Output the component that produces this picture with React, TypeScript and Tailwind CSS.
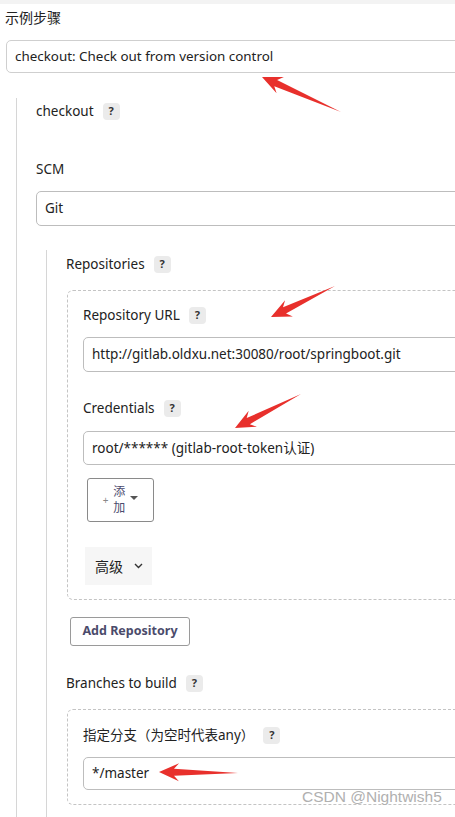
import React from "react";

type Pt = { x: number; y: number };

// red annotation arrow, tapering tail to wide head
function arrowPoints(tip: Pt, tail: Pt, hl = 20, hw = 9, nw = 3.5) {
  const dx = tip.x - tail.x;
  const dy = tip.y - tail.y;
  const len = Math.hypot(dx, dy);
  const ux = dx / len;
  const uy = dy / len;
  const nx = -uy;
  const ny = ux;
  const p = (a: number, b: number) =>
    `${(tip.x - ux * a + nx * b).toFixed(1)},${(tip.y - uy * a + ny * b).toFixed(1)}`;
  return [
    `${tip.x},${tip.y}`,
    p(hl, hw),
    p(hl * 0.75, nw),
    `${tail.x},${tail.y}`,
    p(hl * 0.75, -nw),
    p(hl, -hw),
  ].join(" ");
}

const arrows: [Pt, Pt][] = [
  [{ x: 262, y: 77 }, { x: 341, y: 112 }],
  [{ x: 271, y: 317 }, { x: 335, y: 286 }],
  [{ x: 235, y: 428 }, { x: 301, y: 394 }],
  [{ x: 159, y: 772 }, { x: 238, y: 773 }],
];

function Help() {
  return (
    <span className="ml-[9px] inline-flex h-[17px] w-[17px] items-center justify-center rounded-[4px] bg-[#ebebeb] text-[11px] font-bold text-[#333]">
      ?
    </span>
  );
}

function Label({ text }: { text: string }) {
  return (
    <div className="flex h-[20px] items-center text-[13.5px] text-[#222]">
      <span>{text}</span>
      <Help />
    </div>
  );
}

function Field({ value, h }: { value: string; h: string }) {
  return (
    <div
      className={`${h} flex w-[420px] items-center rounded-[5px] border border-[#bdbdbd] pl-[8px] text-[13.5px] text-[#222]`}
    >
      {value}
    </div>
  );
}

export default function App() {
  return (
    <div
      className="relative h-[817px] w-[455px] overflow-hidden bg-white"
      style={{ fontFamily: '"Noto Sans", "Noto Sans CJK SC", sans-serif' }}
    >
      <div className="h-[4px] bg-[#f3f3f3]" />
      <div className="ml-[5px] mt-[4px] text-[14px] leading-[20px] text-[#222]">示例步骤</div>

      <div className="ml-[6px] mt-[12px] flex h-[33px] w-[470px] items-center rounded-[5px] border border-[#cfcfcf] pl-[8px] text-[13.4px] text-[#222]">
        checkout: Check out from version control
      </div>

      {/* checkout step */}
      <div className="ml-[16px] mt-[25px] border-l-[1.5px] border-[#d6d6d6] pl-[19px] pt-[3px]">
        <Label text="checkout" />

        <div className="mt-[38px] flex h-[20px] items-center text-[13.5px] text-[#222]">SCM</div>
        <div className="mt-[12px] flex h-[35px] w-[430px] items-center rounded-[5px] border border-[#bdbdbd] pl-[8px] text-[13.5px] text-[#222]">
          Git
        </div>

        {/* git scm */}
        <div className="ml-[10px] mt-[24px] border-l-[1.5px] border-[#d6d6d6] pb-[40px] pl-[19px] pt-[4px]">
          <Label text="Repositories" />

          <div className="ml-[1px] mt-[16px] w-[420px] rounded-[6px] border border-dashed border-[#c4c4c4] pb-[14px] pl-[15px] pt-[14px]">
            <Label text="Repository URL" />
            <div className="mt-[12px]">
              <Field value="http://gitlab.oldxu.net:30080/root/springboot.git" h="h-[35px]" />
            </div>

            <div className="mt-[26px]">
              <Label text="Credentials" />
            </div>
            <div className="mt-[13px]">
              <Field value="root/****** (gitlab-root-token认证)" h="h-[34px]" />
            </div>

            <div className="ml-[4px] mt-[13px] flex h-[44px] w-[67px] items-center justify-center gap-[5px] rounded-[3px] border border-[#8a8a8a] text-[#4b4b6e]">
              <span className="text-[10px] leading-none text-[#888]">+</span>
              <span className="flex flex-col items-center text-[12px] leading-[16px]">
                <span>添</span>
                <span>加</span>
              </span>
              <svg width="8" height="5" viewBox="0 0 8 5" className="mb-[4px]">
                <path d="M0 0 L8 0 L4 4 Z" fill="#555" />
              </svg>
            </div>

            <div className="ml-[2px] mt-[25px] flex h-[38px] w-[67px] items-center gap-[11px] bg-[#f6f6f6] pl-[10px] text-[14px] text-[#222]">
              <span>高级</span>
              <svg width="9" height="6" viewBox="0 0 9 6" fill="none" stroke="#333" strokeWidth="1.4">
                <path d="M1 1 L4.5 4.5 L8 1" />
              </svg>
            </div>
          </div>

          <div className="ml-[4px] mt-[17px] flex h-[29px] w-[120px] items-center justify-center rounded-[3px] border border-[#9a9a9a] text-[12.5px] font-bold text-[#4b4b6b]">
            Add Repository
          </div>

          <div className="mt-[27px]">
            <Label text="Branches to build" />
          </div>

          <div className="ml-[1px] mt-[16px] w-[420px] rounded-[6px] border border-dashed border-[#c4c4c4] pb-[14px] pl-[15px] pt-[15px]">
            <Label text="指定分支（为空时代表any）" />
            <div className="mt-[12px]">
              <Field value="*/master" h="h-[33px]" />
            </div>
          </div>
        </div>
      </div>

      {/* annotation arrows */}
      <svg className="pointer-events-none absolute left-0 top-0" width="455" height="817">
        {arrows.map(([tip, tail], i) => (
          <polygon key={i} points={arrowPoints(tip, tail)} fill="#e8302c" />
        ))}
      </svg>

      <div
        className="absolute left-[302px] top-[787px] whitespace-nowrap text-[15.5px] leading-[20px] text-[#b0b0b0]"
        style={{ fontFamily: '"Liberation Sans", sans-serif' }}
      >
        CSDN @Nightwish5
      </div>
    </div>
  );
}
